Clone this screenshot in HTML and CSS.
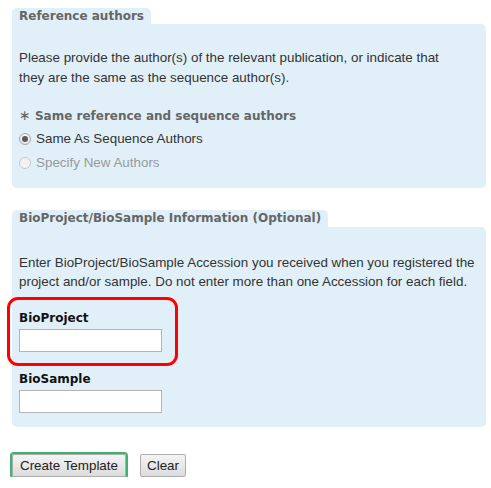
FILE: index.html
```html
<!DOCTYPE html>
<html>
<head>
<meta charset="utf-8">
<link rel="stylesheet" href="styles.css">
</head>
<body>
<div class="page">
  <section class="group">
    <div class="tab">Reference authors</div>
    <div class="panel panel-ref">
      <p class="desc">Please provide the author(s) of the relevant publication, or indicate that they are the same as the sequence author(s).</p>
      <div class="question"><span class="star">∗</span> Same reference and sequence authors</div>
      <label class="radio-row first"><span class="radio checked"></span><span>Same As Sequence Authors</span></label>
      <label class="radio-row disabled"><span class="radio"></span><span>Specify New Authors</span></label>
    </div>
  </section>

  <section class="group group-bio">
    <div class="tab">BioProject/BioSample Information (Optional)</div>
    <div class="panel panel-bio">
      <p class="desc">Enter BioProject/BioSample Accession you received when you registered the project and/or sample. Do not enter more than one Accession for each field.</p>
      <div class="field highlighted">
        <div class="field-label">BioProject</div>
        <input class="text-input" type="text">
        <div class="highlight-ring"></div>
      </div>
      <div class="field">
        <div class="field-label">BioSample</div>
        <input class="text-input" type="text">
      </div>
    </div>
  </section>

  <div class="actions">
    <button class="btn btn-primary">Create Template</button>
    <button class="btn btn-clear">Clear</button>
  </div>
</div>
</body>
</html>
```

FILE: styles.css
```css
* { box-sizing: border-box; }
html, body { margin: 0; padding: 0; background: #fff; }
body {
  font-family: "Liberation Sans", Arial, sans-serif;
  font-size: 13.4px;
  color: #333;
}
.page {
  width: 491px;
  padding: 8px 5px 0 12px;
}
.group { display: flex; flex-direction: column; align-items: flex-start; }
.group-bio { margin-top: 22px; }
.tab {
  background: #e1f0f8;
  border-radius: 5px 5px 0 0;
  padding: 0 7px;
  height: 16px;
  line-height: 16px;
  font-family: "DejaVu Sans", Verdana, sans-serif;
  font-weight: bold;
  font-size: 12px;
  color: #666;
}
.group-bio .tab { height: 17px; line-height: 17px; }
.panel {
  align-self: stretch;
  background: #e1f0f8;
  border-radius: 0 5px 5px 5px;
  padding: 0 10px 0 7px;
}
.panel-ref { height: 164px; padding-top: 24px; }
.panel-bio { height: 200px; padding-top: 26px; }
.desc {
  margin: 0;
  line-height: 20px;
}
.panel-ref .desc { max-width: 440px; }
.panel-bio .desc { line-height: 19px; }
.question {
  margin-top: 19px;
  font-family: "DejaVu Sans", Verdana, sans-serif;
  font-weight: bold;
  font-size: 12px;
  color: #666;
  line-height: 16px;
}
.star { font-weight: normal; font-size: 14px; }
.radio-row {
  display: flex;
  align-items: center;
  gap: 5px;
  height: 24px;
  line-height: 24px;
}
.radio-row.first { margin-top: 3px; }
.radio-row.disabled { color: #999; }
.radio {
  width: 12px;
  height: 12px;
  border-radius: 50%;
  border: 1px solid #a8a8a8;
  background: radial-gradient(circle at 50% 35%, #fff 0%, #dcdcdc 100%);
  position: relative;
}
.radio.checked::after {
  content: "";
  position: absolute;
  left: 2px; top: 2px;
  width: 6px; height: 6px;
  border-radius: 50%;
  background: #5a5a5a;
}
.radio-row.disabled .radio { border-color: #c8c8c8; background: #f2f2f2; }
.field { position: relative; display: flex; flex-direction: column; align-items: flex-start; }
.field.highlighted { margin-top: 18px; }
.field + .field { margin-top: 18px; }
.field-label {
  font-family: "DejaVu Sans", Verdana, sans-serif;
  font-weight: bold;
  font-size: 12px;
  color: #111;
  line-height: 18px;
  margin-bottom: 2px;
}
.text-input {
  width: 143px;
  height: 23px;
  border: 1px solid #b4b4b4;
  background: #fff;
  margin: 0;
  padding: 0 3px;
  font: inherit;
}
.highlight-ring {
  position: absolute;
  left: -12px; top: -12px;
  width: 171px; height: 69px;
  border: 3.5px solid #f00;
  border-radius: 11px;
  pointer-events: none;
}
.actions {
  display: flex;
  align-items: center;
  gap: 14px;
  margin-top: 27px;
}
.btn {
  height: 23px;
  padding: 0;
  border: 1px solid #adadad;
  border-radius: 2px;
  background: linear-gradient(#f4f4f4, #dcdcdc);
  font-family: "Liberation Sans", Arial, sans-serif;
  font-size: 13.4px;
  color: #222;
  margin: 0;
  white-space: nowrap;
  text-align: center;
}
.btn-primary {
  outline: 2px solid #3cb371;
  outline-offset: 0;
  width: 114px;
}
.btn-clear { width: 46px; }
```
